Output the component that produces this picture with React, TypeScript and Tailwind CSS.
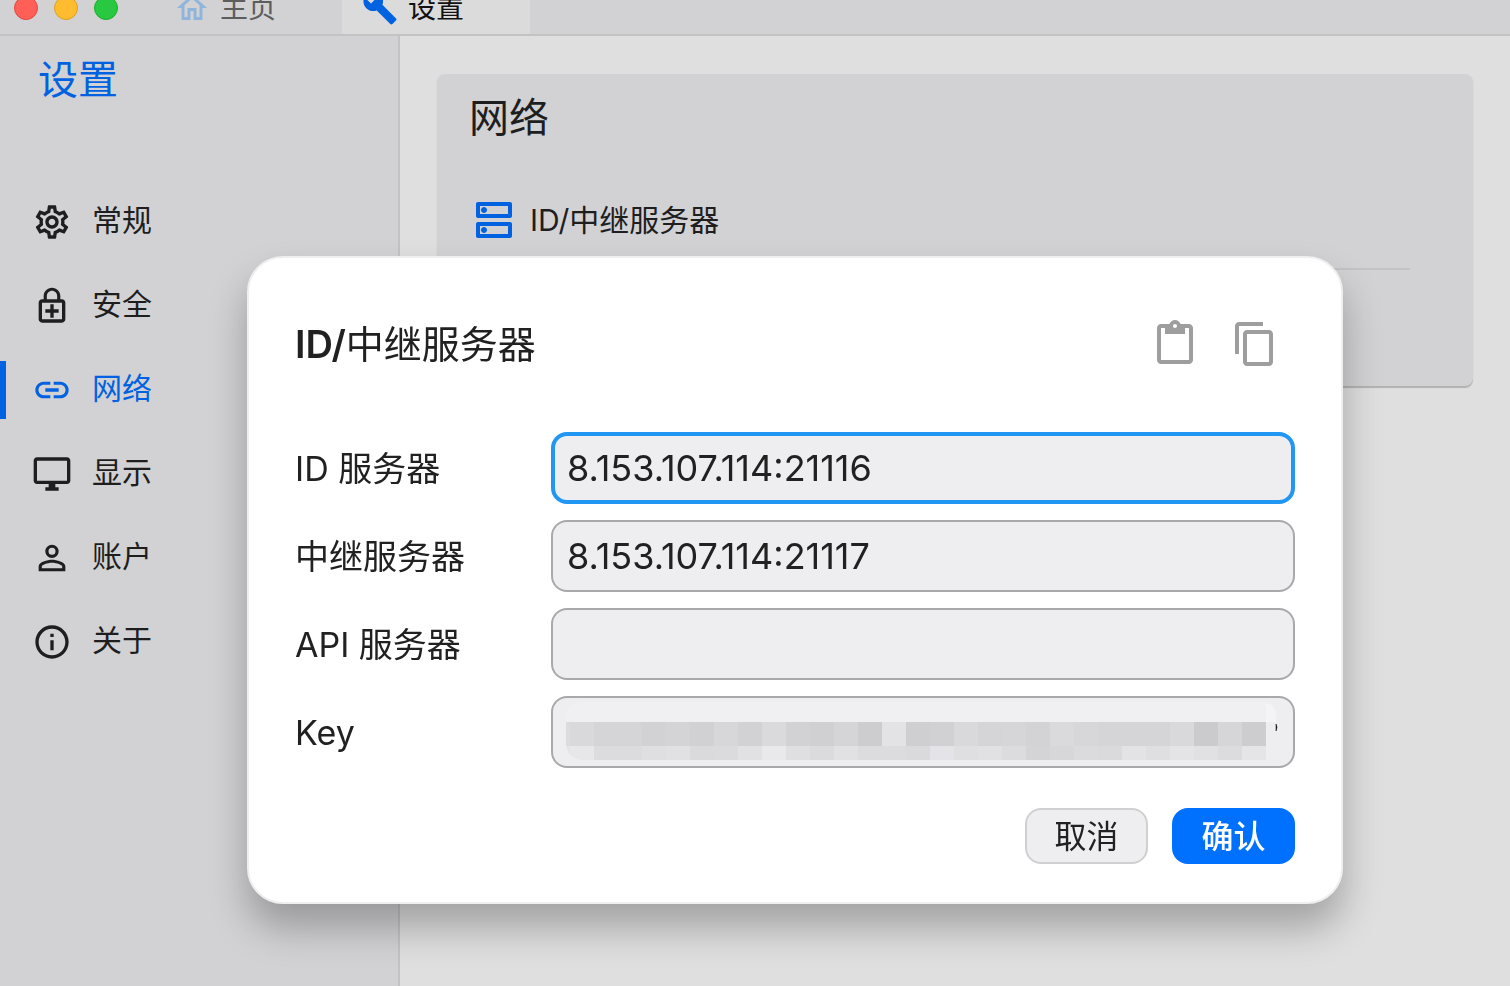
import React, { useState } from "react";
import type { IconType } from "react-icons";
import {
  MdBuild,
  MdContentCopy,
  MdInfoOutline,
  MdLink,
  MdOutlineContentPaste,
  MdOutlineDesktopWindows,
  MdOutlineDns,
  MdOutlineEnhancedEncryption,
  MdOutlineHome,
  MdOutlineSettings,
  MdPersonOutline,
} from "react-icons/md";

const navItems: { label: string; icon: IconType; active?: boolean }[] = [
  { label: "常规", icon: MdOutlineSettings },
  { label: "安全", icon: MdOutlineEnhancedEncryption },
  { label: "网络", icon: MdLink, active: true },
  { label: "显示", icon: MdOutlineDesktopWindows },
  { label: "账户", icon: MdPersonOutline },
  { label: "关于", icon: MdInfoOutline },
];

function TitleBar() {
  return (
    <header className="flex h-9 shrink-0 items-end overflow-hidden border-b-2 border-[#c3c3c4] bg-[#d2d2d4]">
      <div className="flex h-[52px] shrink-0 items-center gap-4 pl-3.5">
        <span className="size-6 rounded-full border border-[#e2463f] bg-[#ff5f57]" />
        <span className="size-6 rounded-full border border-[#dfa023] bg-[#febc2e]" />
        <span className="size-6 rounded-full border border-[#1dad2b] bg-[#28c840]" />
      </div>
      <nav className="flex shrink-0 items-end pl-8">
        <a href="#home" className="flex h-[52px] w-48 items-center gap-2.5 pl-6 text-[28px] leading-8 text-[#5d5d5e]">
          <MdOutlineHome className="size-9 text-[#8fb5dc]" aria-hidden="true" />
          主页
        </a>
        <a href="#settings" className="flex h-[52px] w-[188px] items-center gap-2.5 bg-[#dbdbdb] pl-5 text-[28px] leading-8 text-[#111111]">
          <MdBuild className="size-9 text-[#0062e0]" aria-hidden="true" />
          设置
        </a>
      </nav>
    </header>
  );
}

function Sidebar() {
  return (
    <aside className="w-[400px] shrink-0 border-r-2 border-[#c3c3c4] bg-[#d2d2d4]">
      <h1 className="px-[38px] pt-4 text-[40px] leading-[56px] text-[#0062e0]">设置</h1>
      <nav className="flex flex-col pt-[72px]">
        {navItems.map(({ label, icon: Icon, active }) => (
          <a
            key={label}
            href={`#${label}`}
            aria-current={active ? "page" : undefined}
            className={
              active
                ? "flex h-[84px] items-center text-[30px] leading-10 text-[#0062e0]"
                : "flex h-[84px] items-center text-[30px] leading-10 text-[#1e1e1f]"
            }
          >
            <span className={active ? "h-[58px] w-1.5 bg-[#0062e0]" : "h-[58px] w-1.5"} />
            <Icon className="ml-[26px] size-10" aria-hidden="true" />
            <span className="ml-5 pb-1">{label}</span>
          </a>
        ))}
      </nav>
    </aside>
  );
}

function NetworkCard() {
  return (
    <section className="rounded-lg bg-[#d2d2d4] px-8 pt-4 pb-[116px] shadow-[0_2px_1px_rgba(0,0,0,0.2)]">
      <h2 className="text-[40px] leading-[56px] text-[#1e1e1f]">网络</h2>
      <button type="button" className="mt-12 flex h-[52px] items-center gap-3 pl-px text-[30px] leading-10 text-[#1e1e1f]">
        <MdOutlineDns className="size-12 text-[#0062e0]" aria-hidden="true" />
        ID/中继服务器
      </button>
      <hr className="mt-[22px] mr-[31px] ml-16 border-t-2 border-[#c3c3c5]" />
    </section>
  );
}

const upperTones = [
  "#d9d9db", "#d5d5d7", "#d5d5d7", "#d2d2d4", "#d4d4d6", "#d1d1d3", "#d7d7d9", "#d2d2d4", "#dadadc", "#d2d2d4",
  "#d0d0d2", "#d5d5d7", "#cdcdcf", "#e3e3e5", "#cfcfd1", "#d1d1d3", "#d9d9db", "#d5d5d7", "#d6d6d8", "#d3d3d5",
  "#dadadc", "#d7d7d9", "#d5d5d7", "#d5d5d7", "#d5d5d7", "#d9d9db", "#cbcbcd", "#d6d6d8", "#cdcdcf",
];
const lowerTones = [
  "#e7e7e9", "#dcdcde", "#dcdcde", "#dfdfe1", "#e1e1e3", "#dadadc", "#dbdbdd", "#e1e1e3", "#e9e9eb", "#dfdfe1",
  "#dbdbdd", "#e1e1e3", "#dcdcde", "#dcdcde", "#dadadc", "#e3e3e8", "#dfdfe1", "#e1e1e3", "#dcdcde", "#d4d4d6",
  "#d7d7d9", "#dbdbdd", "#dadadc", "#e3e3e5", "#dfdfe1", "#e4e4e6", "#e1e1e3", "#dcdcde", "#e5e5e7",
];

function MaskedKey() {
  return (
    <svg viewBox="0 0 712 58" className="pointer-events-none absolute top-1.5 left-[15px] h-[58px] w-[712px]" aria-hidden="true">
      <defs>
        <clipPath id="mask-shape">
          <path d="M16 0H698Q710 2 710 14V20H700V58H18Q2 58 0 42V16Q0 0 16 0Z" />
        </clipPath>
      </defs>
      <g clipPath="url(#mask-shape)" shapeRendering="crispEdges">
        <rect width="700" height="20" fill="#f0f0f2" />
        <rect x="700" width="12" height="20" fill="#f4f4f4" />
        <rect y="20" width="4" height="24" fill="#dcdcde" />
        <rect y="44" width="4" height="14" fill="#e4e4e6" />
        {upperTones.map((tone, i) => (
          <rect key={i} x={4 + i * 24} y="20" width="24" height="24" fill={tone} />
        ))}
        {lowerTones.map((tone, i) => (
          <rect key={i} x={4 + i * 24} y="44" width="24" height="14" fill={tone} />
        ))}
      </g>
      <path d="M710 22q2 3 0 7Z" fill="#111111" stroke="#111111" strokeWidth="0.5" />
    </svg>
  );
}

interface FieldProps {
  id: string;
  label: string;
  initial?: string;
  focused?: boolean;
  children?: React.ReactNode;
}

function Field({ id, label, initial = "", focused, children }: FieldProps) {
  const [value, setValue] = useState(initial);
  return (
    <div className="flex items-center">
      <label htmlFor={id} className="w-64 shrink-0 pt-0.5 text-[34px] leading-10 text-[#212121]">
        {label}
      </label>
      <div className="relative min-w-0 flex-1">
        <input
          id={id}
          type="text"
          value={value}
          onChange={(e) => setValue(e.target.value)}
          className={
            focused
              ? "block h-[72px] w-full rounded-2xl border-4 border-[#2196f3] bg-[#eeeef0] px-3 text-[36px] text-[#212121] outline-none"
              : "block h-[72px] w-full rounded-2xl border-2 border-[#a9a9aa] bg-[#eeeef0] px-3.5 text-[36px] text-[#212121] outline-none"
          }
        />
        {children}
      </div>
    </div>
  );
}

function ServerDialog() {
  return (
    <div className="fixed inset-0 flex items-center justify-center pt-[174px] pl-20">
      <form
        role="dialog"
        aria-labelledby="dialog-title"
        onSubmit={(e) => e.preventDefault()}
        className="w-[1096px] max-w-full rounded-[36px] border-2 border-[#efeff0] bg-white px-[46px] pt-[60px] pb-[38px] shadow-[0_24px_38px_rgba(0,0,0,0.27)]"
      >
        <div className="flex h-[52px] items-center justify-between pr-4">
          <h2 id="dialog-title" className="text-[38px] leading-[52px] font-normal text-[#212121]">
            <span className="font-semibold">ID/</span>中继服务器
          </h2>
          <div className="flex gap-8 text-[#9e9e9e]">
            <button type="button" aria-label="粘贴">
              <MdOutlineContentPaste className="size-12" />
            </button>
            <button type="button" aria-label="复制">
              <MdContentCopy className="size-12" />
            </button>
          </div>
        </div>
        <div className="mt-[62px] flex flex-col gap-4">
          <Field id="id-server" label="ID 服务器" initial="8.153.107.114:21116" focused />
          <Field id="relay-server" label="中继服务器" initial="8.153.107.114:21117" />
          <Field id="api-server" label="API 服务器" />
          <Field id="key" label="Key">
            <MaskedKey />
          </Field>
        </div>
        <div className="mt-10 flex justify-end gap-6">
          <button
            type="button"
            className="h-14 w-[123px] rounded-2xl border-2 border-[#d0d0d1] bg-[#eeeef0] pt-0.5 text-[32px] leading-10 text-[#212121]"
          >
            取消
          </button>
          <button type="submit" className="h-14 w-[123px] rounded-2xl bg-[#0071ff] pt-0.5 text-[32px] leading-10 font-medium text-white">
            确认
          </button>
        </div>
      </form>
    </div>
  );
}

export default function App() {
  return (
    <div className="flex min-h-screen flex-col bg-[#dfdfdf] font-['Inter','Noto_Sans_CJK_SC',sans-serif]">
      <TitleBar />
      <div className="flex flex-1">
        <Sidebar />
        <main className="min-w-0 flex-1 px-[37px] pt-[38px]">
          <NetworkCard />
        </main>
      </div>
      <ServerDialog />
    </div>
  );
}
